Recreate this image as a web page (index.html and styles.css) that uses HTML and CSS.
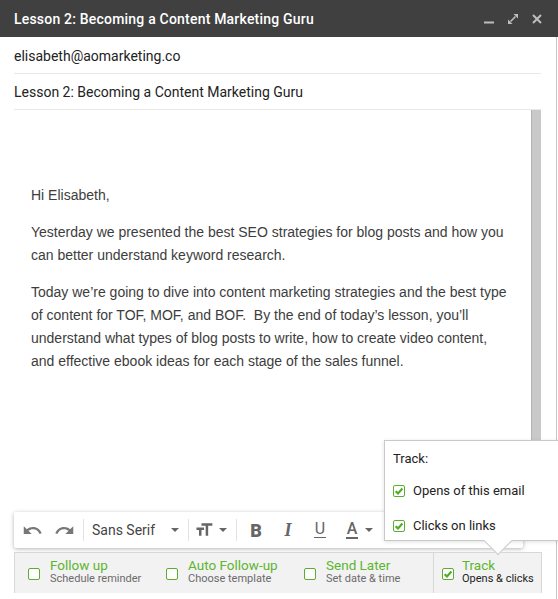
FILE: index.html
```html
<!DOCTYPE html>
<html lang="en">
<head>
  <meta charset="UTF-8">
  <meta name="viewport" content="width=device-width, initial-scale=1.0">
  <title>Compose</title>
  <link rel="stylesheet" href="styles.css">
</head>
<body>
  <div class="compose">
    <header class="titlebar">
      <span class="title">Lesson 2: Becoming a Content Marketing Guru</span>
      <div class="win-actions">
        <svg width="10" height="10" viewBox="0 0 10 10"><rect x="0" y="7.5" width="10" height="2" fill="#bdbdbd"/></svg>
        <svg width="10" height="10" viewBox="0 0 10 10"><polygon points="10,0 10,4.5 5.5,0" fill="#bdbdbd"/><polygon points="0,10 0,5.5 4.5,10" fill="#bdbdbd"/><line x1="2.5" y1="7.5" x2="7.5" y2="2.5" stroke="#bdbdbd" stroke-width="1.6"/></svg>
        <svg width="10" height="10" viewBox="0 0 10 10"><path d="M1 1L9 9M9 1L1 9" stroke="#bdbdbd" stroke-width="2"/></svg>
      </div>
    </header>

    <div class="pane">
      <div class="field">elisabeth@aomarketing.co</div>
      <div class="field">Lesson 2: Becoming a Content Marketing Guru</div>

      <div class="editor">
        <div class="message">
          <p>Hi Elisabeth,</p>
          <p>Yesterday we presented the best SEO strategies for blog posts and how you can better understand keyword research.</p>
          <p>Today we’re going to dive into content marketing strategies and the best type of content for TOF, MOF, and BOF.&nbsp; By the end of today’s lesson, you’ll understand what types of blog posts to write, how to create video content, and effective ebook ideas for each stage of the sales funnel.</p>
        </div>
        <div class="scrollbar"></div>
      </div>

      <div class="toolbar">
        <span class="tool tool-undo">
          <svg width="21" height="21" viewBox="0 0 24 24"><path d="M12.5 8c-2.65 0-5.05.99-6.9 2.6L2 7v9h9l-3.62-3.62c1.39-1.160 3.16-1.88 5.12-1.88 3.54 0 6.55 2.31 7.6 5.5l2.37-.78C21.08 11.03 17.15 8 12.5 8z" fill="#777"/></svg>
        </span>
        <span class="tool tool-redo">
          <svg width="21" height="21" viewBox="0 0 24 24"><path d="M18.4 10.6C16.55 8.99 14.15 8 11.5 8c-4.65 0-8.58 3.03-9.96 7.22L3.9 16c1.05-3.19 4.05-5.5 7.6-5.5 1.95 0 3.73.72 5.12 1.88L13 16h9V7l-3.6 3.6z" fill="#777"/></svg>
        </span>
        <span class="sep sep-first"></span>
        <span class="font-select">Sans Serif <i class="caret"></i></span>
        <span class="sep sep-font"></span>
        <span class="tool-size">
          <svg width="20" height="20" viewBox="0 0 24 24"><path d="M9 4v3h5v12h3V7h5V4H9zm-6 8h3v7h3v-7h3V9H3v3z" fill="#666"/></svg>
        </span>
        <i class="caret caret-size"></i>
        <span class="sep sep-size"></span>
        <span class="tool fmt fmt-bold">B</span>
        <span class="tool fmt fmt-italic">I</span>
        <span class="tool fmt"><span class="fmt-under">U</span></span>
        <span class="tool fmt"><span class="fmt-color">A</span></span>
        <i class="caret caret-color"></i>
      </div>

      <div class="sendbar">
        <div class="opt">
          <span class="check"></span>
          <div class="opt-text">
            <div class="opt-title">Follow up</div>
            <div class="opt-sub">Schedule reminder</div>
          </div>
        </div>
        <div class="opt">
          <span class="check"></span>
          <div class="opt-text">
            <div class="opt-title">Auto Follow-up</div>
            <div class="opt-sub">Choose template</div>
          </div>
        </div>
        <div class="opt">
          <span class="check"></span>
          <div class="opt-text">
            <div class="opt-title">Send Later</div>
            <div class="opt-sub">Set date &amp; time</div>
          </div>
        </div>
        <div class="opt opt-track">
          <span class="check checked"><svg width="10" height="10" viewBox="0 0 10 10"><path d="M1.6 5.2L4 7.4L8.4 2.6" stroke="#4fae25" stroke-width="2.2" fill="none"/></svg></span>
          <div class="opt-text">
            <div class="opt-title">Track</div>
            <div class="opt-sub opt-sub-dark">Opens &amp; clicks</div>
          </div>
        </div>
      </div>

      <div class="track-pop">
        <div class="pop-title">Track:</div>
        <div class="pop-row">
          <span class="check checked"><svg width="10" height="10" viewBox="0 0 10 10"><path d="M1.6 5.2L4 7.4L8.4 2.6" stroke="#4fae25" stroke-width="2.2" fill="none"/></svg></span>
          Opens of this email
        </div>
        <div class="pop-row">
          <span class="check checked"><svg width="10" height="10" viewBox="0 0 10 10"><path d="M1.6 5.2L4 7.4L8.4 2.6" stroke="#4fae25" stroke-width="2.2" fill="none"/></svg></span>
          Clicks on links
        </div>
      </div>
    </div>
  </div>
</body>
</html>
```

FILE: styles.css
```css
/* Page */
body {
  margin: 0;
  width: 558px;
  height: 599px;
  overflow: hidden;
  background: #fff;
  font-family: 'Roboto', 'Liberation Sans', sans-serif;
  color: #222;
}

.compose {
  width: 558px;
}

/* Title bar */
.titlebar {
  height: 37px;
  background: #404040;
  display: flex;
  align-items: center;
  justify-content: space-between;
  padding: 0 16px 0 14px;
  box-sizing: border-box;
}

.title {
  color: #fff;
  font-size: 14px;
  font-weight: 500;
  letter-spacing: 0.2px;
}

.win-actions {
  display: flex;
  gap: 14px;
  margin-top: 1px;
}

.win-actions svg {
  display: block;
}

/* Body of the window */
.pane {
  position: relative;
  width: 557px;
  border-right: 1px solid #c6c6c6;
  box-sizing: border-box;
  height: 562px;
}

.field {
  margin: 0 15px 0 14px;
  padding-top: 2px;
  line-height: 34px;
  font-size: 14px;
  color: #222;
  border-bottom: 1px solid #e8e8e8;
}

.field + .field {
  padding-top: 1px;
  line-height: 34px;
}

.editor {
  display: flex;
  height: 402px;
  padding: 0 15px 0 14px;
}

.message {
  flex: 1;
  padding: 74px 20px 0 17px;
  font-family: 'Liberation Sans', Arial, sans-serif;
  font-size: 14px;
  line-height: 23px;
  color: #3d3d3d;
}

.message p {
  margin: 0 0 14px;
}

.scrollbar {
  width: 10px;
  background: #c9c9c9;
  border-left: 1px solid #b3b3b3;
  box-sizing: border-box;
}

/* Formatting toolbar */
.toolbar {
  margin-left: 14px;
  width: 509px;
  height: 36px;
  display: flex;
  align-items: center;
  padding-left: 4px;
  box-sizing: border-box;
  background: #fff;
  border-radius: 2px;
  box-shadow: 0 1px 4px rgba(0, 0, 0, 0.3);
}

.tool {
  display: flex;
  align-items: center;
  justify-content: center;
  width: 28px;
  height: 28px;
}

.tool svg,
.tool-size svg {
  display: block;
}

.tool-redo {
  margin-left: 4px;
}

.sep {
  width: 1px;
  height: 22px;
  background: #e3e3e3;
}

.sep-first {
  margin-left: 5px;
}

.font-select {
  display: flex;
  align-items: center;
  justify-content: space-between;
  width: 87px;
  margin-left: 8px;
  padding-right: 2px;
  font-size: 14px;
  color: #444;
}

.caret {
  width: 0;
  height: 0;
  border-left: 4px solid transparent;
  border-right: 4px solid transparent;
  border-top: 4px solid #666;
}

.sep-font {
  margin-left: 7px;
}

.tool-size {
  margin-left: 5px;
}

.caret-size {
  margin-left: 5px;
}

.sep-size {
  margin-left: 9px;
}

.fmt {
  width: 32px;
  color: #666;
  font-size: 18px;
}

.fmt-bold {
  margin-left: 3px;
  font-weight: 900;
}

.fmt-italic {
  font-family: 'Liberation Serif', serif;
  font-style: italic;
  font-weight: 700;
}

.fmt-under {
  font-size: 16px;
  line-height: 14px;
  padding: 0 1px 1px;
  border-bottom: 1.5px solid #666;
}

.fmt-color {
  font-size: 16px;
  font-weight: 500;
  line-height: 14px;
  padding: 0 1px 1px;
  border-bottom: 2px solid #666;
}

.caret-color {
  margin-left: -3px;
}

/* Send options bar */
.sendbar {
  margin: 4px 14px 0 14px;
  height: 41px;
  display: grid;
  grid-template-columns: 138px 138px 1fr 108px;
  padding-left: 13px;
  background: #f2f2f2;
  border: 1px solid #d8d8d8;
  border-bottom: none;
  box-sizing: border-box;
}

.opt {
  display: flex;
  align-items: center;
  gap: 10px;
  white-space: nowrap;
}

.opt-track {
  border-left: 1px solid #d8d8d8;
  padding-left: 8px;
  gap: 8px;
}

.opt-text {
  margin-top: -3px;
}

.opt-title {
  font-size: 13.5px;
  line-height: 14px;
  color: #5db530;
}

.opt-sub {
  font-size: 11px;
  line-height: 13px;
  color: #6b6b6b;
}

.opt-sub-dark {
  color: #222;
}

.check {
  width: 12px;
  height: 12px;
  flex: none;
  box-sizing: border-box;
  border: 1px solid #5aad2e;
  border-radius: 2px;
  background: #fff;
  display: flex;
  align-items: center;
  justify-content: center;
}

.opt .check {
  margin-top: 1px;
}

/* Track popover */
.track-pop {
  position: absolute;
  left: 384px;
  top: 403px;
  width: 180px;
  height: 101px;
  box-sizing: border-box;
  padding: 10px 8px 0;
  background: #fff;
  border: 1px solid #c9c9c9;
  box-shadow: 0 1px 4px rgba(0, 0, 0, 0.12);
  font-size: 13px;
  color: #222;
}

.track-pop::after {
  content: '';
  position: absolute;
  left: 103px;
  bottom: -11px;
  width: 20px;
  height: 20px;
  box-sizing: border-box;
  background: #fff;
  border-right: 1px solid #c9c9c9;
  border-bottom: 1px solid #c9c9c9;
  transform: rotate(45deg);
}

.pop-title {
  line-height: 16px;
}

.pop-row {
  display: flex;
  align-items: center;
  gap: 8px;
  line-height: 16px;
  margin-top: 16px;
}

.pop-row + .pop-row {
  margin-top: 19px;
}
```
